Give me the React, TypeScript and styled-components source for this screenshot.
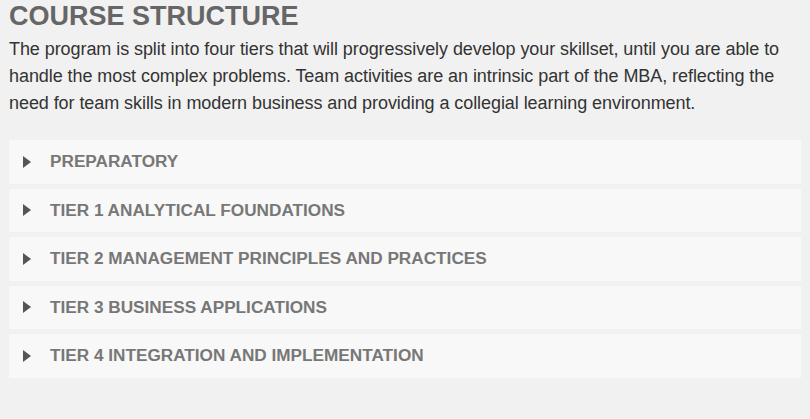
import React from 'react';
import styled, { createGlobalStyle } from 'styled-components';

const GlobalStyle = createGlobalStyle`
  html, body {
    margin: 0;
    padding: 0;
    background: #f1f1f1;
  }
  body {
    font-family: 'Liberation Sans', Arial, sans-serif;
  }
`;

const aTiers: string[] = [
  'PREPARATORY',
  'TIER 1 ANALYTICAL FOUNDATIONS',
  'TIER 2 MANAGEMENT PRINCIPLES AND PRACTICES',
  'TIER 3 BUSINESS APPLICATIONS',
  'TIER 4 INTEGRATION AND IMPLEMENTATION',
];

const App = () => {
  return (
    <>
      <GlobalStyle />
      <Section>
        <Title>Course Structure</Title>
        <Intro>
          The program is split into four tiers that will progressively develop
          your skillset, until you are able to handle the most complex problems.
          Team activities are an intrinsic part of the MBA, reflecting the need
          for team skills in modern business and providing a collegial learning
          environment.
        </Intro>

        <Accordion>
          {aTiers.map((sTier) => (
            <Item key={sTier}>
              <Arrow />
              <ItemTitle>{sTier}</ItemTitle>
            </Item>
          ))}
        </Accordion>
      </Section>
    </>
  );
};

const Section = styled.section`
  padding: 0 9px;
  width: 792px;
`;

const Title = styled.h2`
  margin: 0;
  padding-top: 1px;
  font-weight: 700;
  font-size: 27px;
  line-height: 31px;
  text-transform: uppercase;
  color: #666666;
`;

const Intro = styled.p`
  margin: 4px 0 0;
  font-size: 18px;
  line-height: 27px;
  letter-spacing: -0.07px;
  color: #333333;
`;

const Accordion = styled.div`
  display: flex;
  flex-direction: column;
  gap: 5px;
  margin-top: 23px;
`;

const Item = styled.div`
  display: flex;
  align-items: center;
  height: 43.5px;
  padding-left: 14px;
  background: #f8f8f8;
  cursor: pointer;
`;

const Arrow = styled.span`
  width: 0;
  height: 0;
  border-top: 6px solid transparent;
  border-bottom: 6px solid transparent;
  border-left: 8px solid #555555;
  margin-right: 19px;
`;

const ItemTitle = styled.span`
  font-weight: 700;
  font-size: 17.2px;
  color: #777777;
`;

export default App;
